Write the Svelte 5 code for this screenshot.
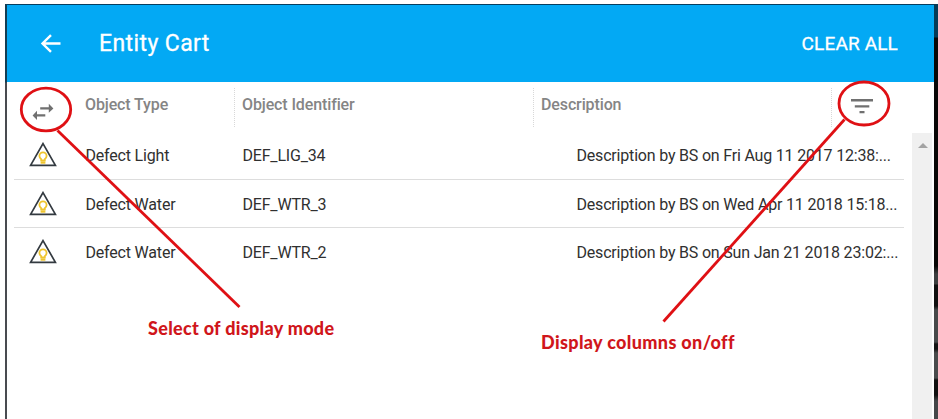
<script>
  const columns = ['Object Type', 'Object Identifier', 'Description'];
  const rows = [
    { type: 'Defect Light', id: 'DEF_LIG_34', description: 'Description by BS on Fri Aug 11 2017 12:38:...' },
    { type: 'Defect Water', id: 'DEF_WTR_3', description: 'Description by BS on Wed Apr 11 2018 15:18...' },
    { type: 'Defect Water', id: 'DEF_WTR_2', description: 'Description by BS on Sun Jan 21 2018 23:02:...' }
  ];
</script>

<div class="stage">
  <div class="left-edge"></div>
  <main class="panel">
    <header class="bar">
      <svg class="back" width="22" height="20" viewBox="0 0 22 20"><path d="M20.5 9.5H2.5M11 1.1L2.5 9.5l8.5 8.4" /></svg>
      <h1>Entity Cart</h1>
      <button>CLEAR ALL</button>
    </header>
    <div class="columns">
      <div class="mode">
        <svg width="22" height="18" viewBox="0 0 22 18"><path d="M8.2 4.2h8.6V.8l4.6 4.6-4.6 4.4V6.5H8.2zM13.3 11.2H5V7.8L.6 12.4 5 16.9v-3.4h8.3z" /></svg>
      </div>
      {#each columns as column}
        <div class="heading"><span>{column}</span></div>
      {/each}
      <div class="filter">
        <svg width="22" height="16" viewBox="0 0 22 16"><path d="M0 0h22v2.4H0zM3.8 6.2h14.5v2.3H3.8zM8.5 12h5v2.3h-5z" /></svg>
      </div>
    </div>
    <div class="body">
      <div class="list">
        {#each rows as row}
          <div class="row">
            <svg class="warning" width="28" height="25" viewBox="0 0 28 25">
              <path class="triangle" d="M14 1.6L26.4 23.3H1.6z" />
              <path class="bulb" d="M12.2 18.4v-1.3c-1.2-1-1.8-1.9-1.8-3.1a3.6 3.6 0 0 1 7.2 0c0 1.2-.6 2.1-1.8 3.1v1.3z" />
              <path class="bulb base" d="M11.6 20.5h4.8" />
            </svg>
            <span class="type">{row.type}</span>
            <span class="ident">{row.id}</span>
            <span class="description">{row.description}</span>
          </div>
        {/each}
      </div>
      <div class="scroll"><i></i></div>
    </div>
  </main>
  <div class="right-edge"></div>

  <svg class="marks" width="938" height="419" viewBox="0 0 938 419">
    <ellipse cx="46" cy="109.5" rx="24.7" ry="21.4" />
    <path d="M57.5 130.5L239.5 307" />
    <ellipse cx="864" cy="103.5" rx="25" ry="21.5" />
    <path d="M844.5 119.5L663.5 321.5" />
  </svg>
  <div class="note mode-note">Select of display mode</div>
  <div class="note filter-note">Display columns on/off</div>
</div>

<style>
  .stage {
    position: relative;
    box-sizing: border-box;
    display: flex;
    width: 938px;
    height: 419px;
    padding: 4px 0 0 5px;
    overflow: hidden;
    background: #fff;
    font-family: Roboto, sans-serif;
  }
  .left-edge { width: 2px; background: linear-gradient(#123e55 0 78px, #494b50 79px); }
  .panel { display: flex; flex-direction: column; width: 927px; border-top: 1px solid #063e60; }
  .right-edge { flex: 1; background: linear-gradient(#063b56 0 33px, #080706 34px 262px, #3d3f40 270px 280px, #111 281px 302px, #484a4b 306px 338px, #151515 340px 345px, #4a4c4d 349px 374px, #111 376px 391px, #454749 397px); }
  .bar {
    box-sizing: border-box;
    display: flex;
    align-items: center;
    height: 77px;
    padding: 0 36px 0 33px;
    background: #03a9f4;
    color: #fff;
  }
  .back { fill: none; stroke: #fff; stroke-width: 2.4; }
  h1 { margin: 0 0 0 37px; font-size: 23px; font-weight: 400; letter-spacing: 0.4px; line-height: 30px; white-space: nowrap; -webkit-text-stroke: 0.3px #fff; }
  button { margin-left: auto; padding: 0; border: 0; background: none; color: #fff; font: 400 19px/30px Roboto, sans-serif; letter-spacing: 0.15px; white-space: nowrap; -webkit-text-stroke: 0.3px #fff; }
  .columns { display: grid; grid-template-columns: 69px 159px 299px 298px 1fr; height: 51px; }
  .mode { padding: 21px 0 0 25px; }
  .mode svg, .filter svg { display: block; fill: #707070; }
  .heading { height: 39px; margin-top: 6px; border-right: 1px dotted #d8d8d8; color: #858585; font-size: 16px; font-weight: 500; letter-spacing: -0.12px; line-height: 34px; white-space: nowrap; }
  .heading:nth-child(2) { padding-left: 9px; }
  .heading:nth-child(3) { padding-left: 7px; }
  .heading:nth-child(4) { padding-left: 7px; }
  .filter { padding: 17px 0 0 19px; }
  .body { display: flex; flex: 1; }
  .list { width: 905px; margin-top: -2px; }
  .row {
    box-sizing: border-box;
    display: flex;
    align-items: center;
    height: 48.5px;
    width: 890px;
    margin-left: 7px;
    border-bottom: 1px solid #ddd;
    color: #303030;
    font-size: 16px;
    letter-spacing: -0.19px;
    white-space: nowrap;
  }
  .row:last-child { border-color: transparent; }
  .row > * { flex-shrink: 0; }
  .row span { padding-top: 2px; }
  .warning { margin-left: 15px; fill: none; }
  .triangle { stroke: #333a40; stroke-width: 1.7; }
  .bulb { stroke: #efc52e; stroke-width: 1.8; }
  .base { stroke-width: 2.4; }
  .type { width: 157px; margin-left: 28.5px; }
  .ident { width: 334px; }
  .scroll { width: 20px; background: #f0f0f0; }
  .scroll i { display: block; width: 0; margin: 10px auto 0 6px; border: 5px solid transparent; border-top: 0; border-bottom-color: #a3a3a3; }
  .marks { position: absolute; left: 0; top: 0; fill: none; stroke: #df1014; stroke-width: 2.8; }
  .note { position: absolute; color: #d0161b; font: 900 18px/24px Lato, sans-serif; white-space: nowrap; }
  .mode-note { left: 148px; top: 316px; letter-spacing: 0.3px; }
  .filter-note { left: 541px; top: 330px; letter-spacing: 0.35px; }
</style>
